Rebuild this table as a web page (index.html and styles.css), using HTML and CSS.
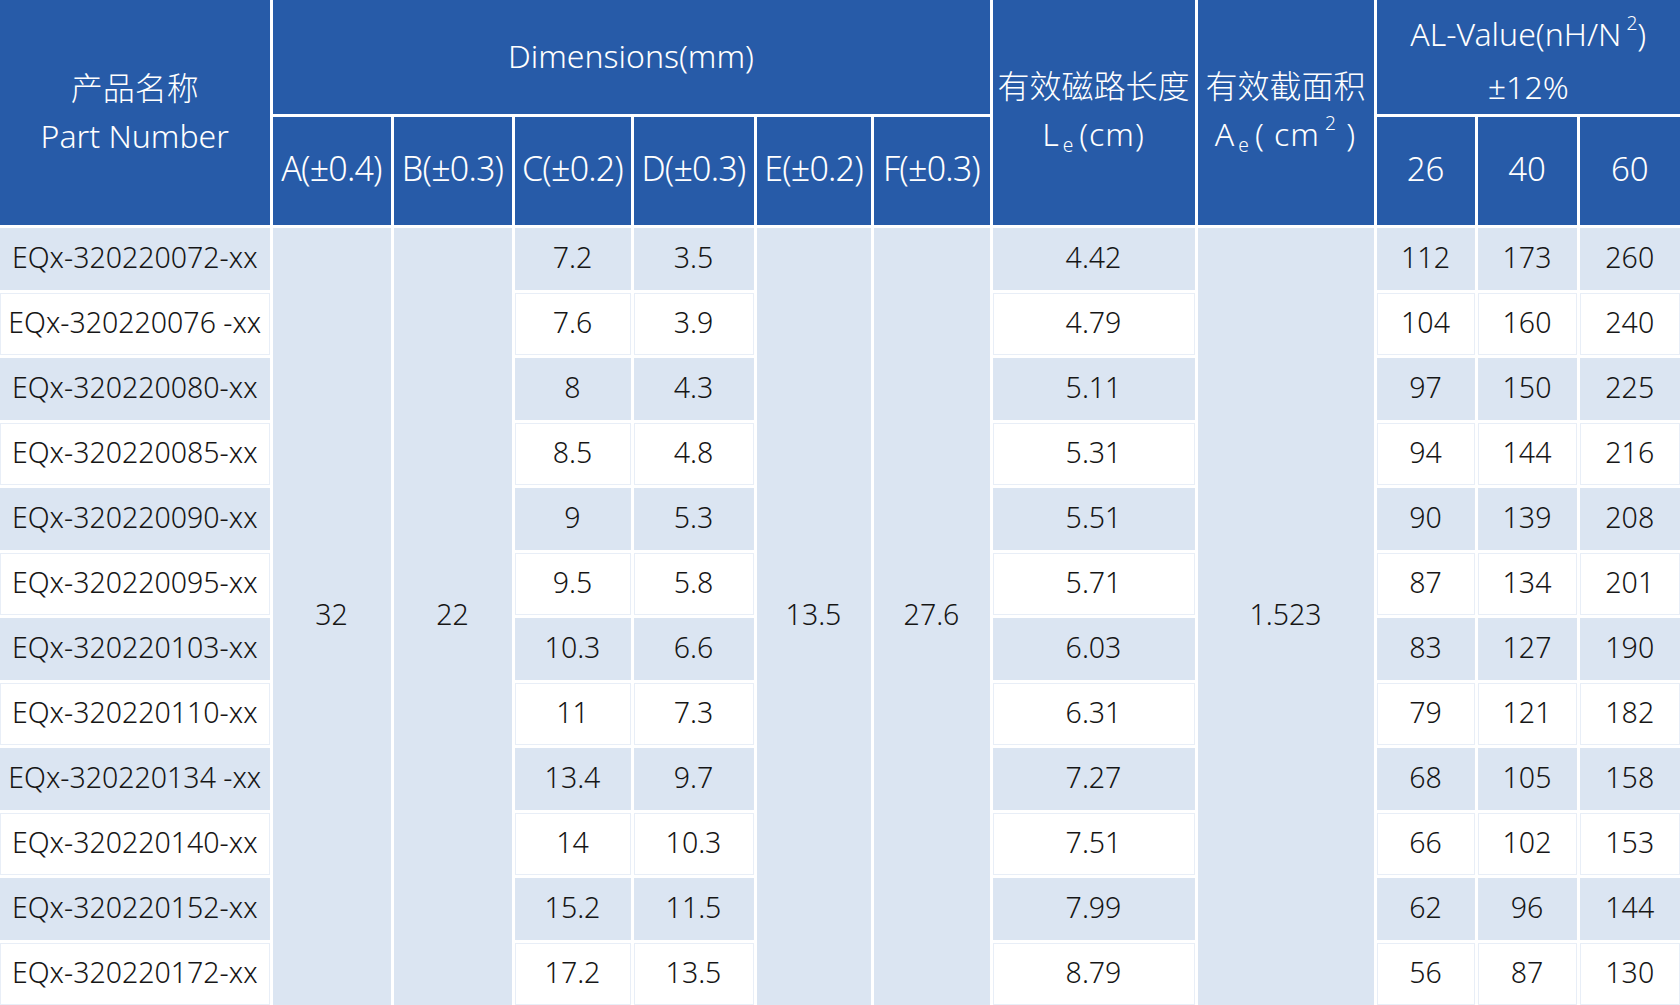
FILE: index.html
```html
<!DOCTYPE html>
<html lang="zh-CN">
<head>
<meta charset="utf-8">
<title>EQ32 Part Table</title>
<link rel="stylesheet" href="styles.css">
</head>
<body>
<table class="spec">
  <colgroup>
    <col class="c-part">
    <col class="c-a"><col class="c-b"><col class="c-c"><col class="c-d"><col class="c-e"><col class="c-f">
    <col class="c-le"><col class="c-ae">
    <col class="c-al1"><col class="c-al2"><col class="c-al3">
  </colgroup>
  <thead>
    <tr class="h1">
      <th rowspan="2" class="hd-part"><span class="zh">产品名称</span><br>Part Number</th>
      <th colspan="6" class="hd-dim">Dimensions(mm)</th>
      <th rowspan="2" class="hd-le"><span class="zh">有效磁路长度</span><br><span class="le">L<sub>e</sub>(cm)</span></th>
      <th rowspan="2" class="hd-ae"><span class="zh">有效截面积</span><br><span class="ae">A<sub>e</sub>( cm<sup>2</sup> )</span></th>
      <th colspan="3" class="hd-al">AL-Value(nH/N<sup>2</sup>)<br>±12%</th>
    </tr>
    <tr class="h2">
      <th>A(±0.4)</th><th>B(±0.3)</th><th>C(±0.2)</th><th>D(±0.3)</th><th>E(±0.2)</th><th>F(±0.3)</th>
      <th class="al">26</th><th class="al">40</th><th class="al">60</th>
    </tr>
  </thead>
  <tbody>
    <tr class="odd"><td>EQx-320220072-xx</td><td rowspan="12" class="merged">32</td><td rowspan="12" class="merged">22</td><td>7.2</td><td>3.5</td><td rowspan="12" class="merged">13.5</td><td rowspan="12" class="merged">27.6</td><td>4.42</td><td rowspan="12" class="merged">1.523</td><td>112</td><td>173</td><td>260</td></tr>
    <tr class="even"><td>EQx-320220076 -xx</td><td>7.6</td><td>3.9</td><td>4.79</td><td>104</td><td>160</td><td>240</td></tr>
    <tr class="odd"><td>EQx-320220080-xx</td><td>8</td><td>4.3</td><td>5.11</td><td>97</td><td>150</td><td>225</td></tr>
    <tr class="even"><td>EQx-320220085-xx</td><td>8.5</td><td>4.8</td><td>5.31</td><td>94</td><td>144</td><td>216</td></tr>
    <tr class="odd"><td>EQx-320220090-xx</td><td>9</td><td>5.3</td><td>5.51</td><td>90</td><td>139</td><td>208</td></tr>
    <tr class="even"><td>EQx-320220095-xx</td><td>9.5</td><td>5.8</td><td>5.71</td><td>87</td><td>134</td><td>201</td></tr>
    <tr class="odd"><td>EQx-320220103-xx</td><td>10.3</td><td>6.6</td><td>6.03</td><td>83</td><td>127</td><td>190</td></tr>
    <tr class="even"><td>EQx-320220110-xx</td><td>11</td><td>7.3</td><td>6.31</td><td>79</td><td>121</td><td>182</td></tr>
    <tr class="odd"><td>EQx-320220134 -xx</td><td>13.4</td><td>9.7</td><td>7.27</td><td>68</td><td>105</td><td>158</td></tr>
    <tr class="even"><td>EQx-320220140-xx</td><td>14</td><td>10.3</td><td>7.51</td><td>66</td><td>102</td><td>153</td></tr>
    <tr class="odd"><td>EQx-320220152-xx</td><td>15.2</td><td>11.5</td><td>7.99</td><td>62</td><td>96</td><td>144</td></tr>
    <tr class="even"><td>EQx-320220172-xx</td><td>17.2</td><td>13.5</td><td>8.79</td><td>56</td><td>87</td><td>130</td></tr>
  </tbody>
</table>
</body>
</html>
```
FILE: styles.css
```css
html, body {
  margin: 0;
  padding: 0;
  background: #ffffff;
  overflow: hidden;
}

.spec {
  width: 1680px;
  table-layout: fixed;
  border-collapse: collapse;
  border-style: hidden;
  font-family: "Noto Sans", "Noto Sans CJK SC", sans-serif;
  font-weight: 300;
  color: #161616;
}

.c-part { width: 271px; }
.c-a { width: 121px; }
.c-b { width: 121px; }
.c-c { width: 119px; }
.c-d { width: 123px; }
.c-e { width: 117px; }
.c-f { width: 119px; }
.c-le { width: 205px; }
.c-ae { width: 179px; }
.c-al1 { width: 101px; }
.c-al2 { width: 102px; }
.c-al3 { width: 102px; }

.spec th,
.spec td {
  border: 3px solid #ffffff;
  padding: 0;
  text-align: center;
  vertical-align: middle;
  white-space: nowrap;
}

.spec th {
  background: #275ba8;
  color: #ffffff;
  font-weight: 300;
  font-size: 32px;
  line-height: 48px;
}

.spec .zh {
  font-family: "Noto Sans CJK SC", sans-serif;
  font-size: 32px;
  font-weight: 300;
}

.h1 { height: 115px; }
.h2 { height: 111px; }

.spec th.hd-part { padding-bottom: 2px; }
.spec th.hd-dim { padding-bottom: 1px; }
.spec th.hd-al { line-height: 53px; padding-top: 6px; }
.spec th.hd-le,
.spec th.hd-ae { padding-bottom: 7px; }
.spec th.hd-le .le,
.spec th.hd-ae .ae { letter-spacing: 1px; }
.h2 th { font-size: 34px; letter-spacing: -0.8px; padding-bottom: 6px; }
.spec .h2 th.al { font-size: 33px; letter-spacing: 0; padding-bottom: 4px; }

.spec sub {
  font-size: 60%;
  vertical-align: -0.35em;
  line-height: 0;
  margin: 0 5px 0 3px;
}

.spec sup {
  font-size: 60%;
  vertical-align: 0.8em;
  line-height: 0;
  margin-left: 5px;
}

.spec td {
  height: 58px;
  font-size: 28.5px;
  line-height: 32px;
  font-weight: 350;
  padding-bottom: 4px;
}

.odd td { background: #dbe5f2; }
.even td { background: #ffffff; box-shadow: inset 0 0 0 1px #e8eef7; }
.spec td.merged { background: #dbe5f2; box-shadow: none; }
```
